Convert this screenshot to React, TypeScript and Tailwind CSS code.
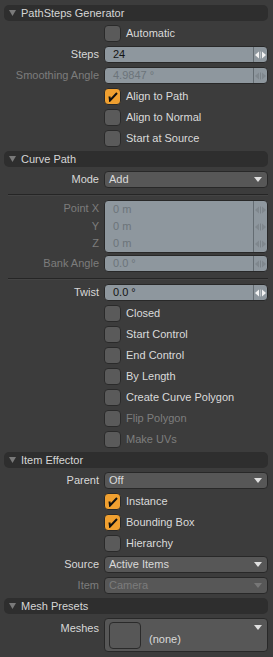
import React from 'react';

const font = { fontFamily: '"Liberation Sans", Arial, sans-serif' };

const Header: React.FC<{ title: string }> = ({ title }) => (
  <div className="h-[16px] mt-[2px] first:mt-0 rounded-[5px] bg-[#2e2e2e] flex items-center pl-[5px]">
    <svg width="7" height="6" viewBox="0 0 7 6" className="mr-[5px]">
      <polygon points="0,0 7,0 3.5,6" fill="#7a7a7a" />
    </svg>
    <span className="text-[11px] text-[#d6d6d6] leading-none">{title}</span>
  </div>
);

const Row: React.FC<{ label?: string; dim?: boolean; children: React.ReactNode }> = ({ label, dim, children }) => (
  <div className="flex items-center h-[21px]">
    <div className={`w-[95px] text-right text-[11px] leading-none ${dim ? 'text-[#7c7c7c]' : 'text-[#d8d8d8]'}`}>{label}</div>
    <div className="flex-1 ml-[5px] flex items-center">{children}</div>
  </div>
);

const Spin: React.FC<{ dim?: boolean }> = ({ dim }) => (
  <div className="w-[14px] h-full border-l border-[#646c72] flex items-center justify-center">
    <svg width="11" height="8" viewBox="0 0 11 8">
      <polygon points="0,4 4,0.5 4,7.5" fill={dim ? '#7f878d' : '#f2f2f2'} />
      <rect x="5" y="0.5" width="1" height="7" fill={dim ? '#7a8288' : '#b8bec2'} />
      <polygon points="7,0.5 11,4 7,7.5" fill={dim ? '#7f878d' : '#f2f2f2'} />
    </svg>
  </div>
);

const Field: React.FC<{ value: string; dim?: boolean }> = ({ value, dim }) => (
  <div className="flex-1 h-[17px] rounded-[4px] border border-[#282828] bg-[#8e979e] flex items-center">
    <span className={`flex-1 pl-[8px] text-[11px] leading-none ${dim ? 'text-[#6c747a]' : 'text-[#141414]'}`}>{value}</span>
    <Spin dim={dim} />
  </div>
);

const Arrow: React.FC<{ dim?: boolean }> = ({ dim }) => (
  <svg width="8" height="5" viewBox="0 0 8 5">
    <polygon points="0,0 8,0 4,5" fill={dim ? '#777777' : '#e0e0e0'} />
  </svg>
);

const Select: React.FC<{ value: string; dim?: boolean }> = ({ value, dim }) => (
  <div className="flex-1 h-[17px] rounded-[4px] border border-[#282828] bg-[#575757] flex items-center pl-[4px] pr-[5px]">
    <span className={`flex-1 text-[11px] leading-none ${dim ? 'text-[#7c7c7c]' : 'text-[#dadada]'}`}>{value}</span>
    <Arrow dim={dim} />
  </div>
);

const Check: React.FC<{ label: string; on?: boolean; dim?: boolean }> = ({ label, on, dim }) => (
  <Row>
    <div className={`w-[17px] h-[17px] rounded-[4px] border border-[#2a2a2a] flex items-center justify-center ${on ? 'bg-[#f0a030]' : 'bg-[#5a5a5a]'}`}>
      {on && (
        <svg width="11" height="11" viewBox="0 0 11 11">
          <path d="M2.5 5.5 L3 9.5 L10 2" stroke="#111" strokeWidth="2" fill="none" />
        </svg>
      )}
    </div>
    <span className={`ml-[5px] text-[11px] leading-none ${dim ? 'text-[#7e7e7e]' : 'text-[#dadada]'}`}>{label}</span>
  </Row>
);

const Sep: React.FC = () => (
  <div className="h-[8px] pt-[4px] pl-[4px]">
    <div className="h-px bg-[#252525]" />
    <div className="h-px bg-[#444444]" />
  </div>
);

export default function App() {
  return (
    <div style={font} className="w-[273px] h-[657px] bg-[#3c3c3c] pl-[4px] pr-[5px] pt-[5px] overflow-hidden">
      <Header title="PathSteps Generator" />
      <div className="h-[2px]" />
      <Check label="Automatic" />
      <Row label="Steps"><Field value="24" /></Row>
      <Row label="Smoothing Angle" dim><Field value="4.9847 °" dim /></Row>
      <Check label="Align to Path" on />
      <Check label="Align to Normal" />
      <Check label="Start at Source" />

      <Header title="Curve Path" />
      <div className="h-[2px]" />
      <Row label="Mode"><Select value="Add" /></Row>
      <Sep />
      <div className="flex pt-[2px]">
        <div className="w-[95px] flex flex-col text-right text-[11px] text-[#7c7c7c] leading-none">
          <div className="h-[17px] flex items-center justify-end">Point X</div>
          <div className="h-[18px] flex items-center justify-end">Y</div>
          <div className="h-[17px] flex items-center justify-end">Z</div>
        </div>
        <div className="flex-1 ml-[5px] h-[53px] rounded-[4px] border border-[#282828] bg-[#8e979e] flex">
          <div className="flex-1 flex flex-col text-[11px] text-[#6c747a] leading-none pl-[8px]">
            <div className="h-[17px] flex items-center">0 m</div>
            <div className="h-[17px] flex items-center">0 m</div>
            <div className="h-[17px] flex items-center">0 m</div>
          </div>
          <div className="flex flex-col">
            <div className="h-[17px]"><Spin dim /></div>
            <div className="h-[17px]"><Spin dim /></div>
            <div className="h-[17px]"><Spin dim /></div>
          </div>
        </div>
      </div>
      <Row label="Bank Angle" dim><Field value="0.0 °" dim /></Row>
      <Sep />
      <Row label="Twist"><Field value="0.0 °" /></Row>
      <Check label="Closed" />
      <Check label="Start Control" />
      <Check label="End Control" />
      <Check label="By Length" />
      <Check label="Create Curve Polygon" />
      <Check label="Flip Polygon" dim />
      <Check label="Make UVs" dim />

      <Header title="Item Effector" />
      <div className="h-[2px]" />
      <Row label="Parent"><Select value="Off" /></Row>
      <Check label="Instance" on />
      <Check label="Bounding Box" on />
      <Check label="Hierarchy" />
      <Row label="Source"><Select value="Active Items" /></Row>
      <Row label="Item" dim><Select value="Camera" dim /></Row>

      <Header title="Mesh Presets" />
      <div className="flex pt-[4px]">
        <div className="w-[95px] text-right text-[11px] text-[#d8d8d8] leading-none pt-[5px]">Meshes</div>
        <div className="flex-1 ml-[5px] h-[34px] rounded-[4px] border border-[#282828] bg-[#575757] flex pl-[4px] pt-[3px] pr-[5px]">
          <div className="w-[32px] h-[27px] rounded-[4px] border border-[#2a2a2a]" />
          <span className="ml-[8px] mt-[12px] text-[11px] text-[#dadada] leading-none">(none)</span>
          <div className="flex-1" />
          <div className="pt-[3px]"><Arrow /></div>
        </div>
      </div>
    </div>
  );
}
